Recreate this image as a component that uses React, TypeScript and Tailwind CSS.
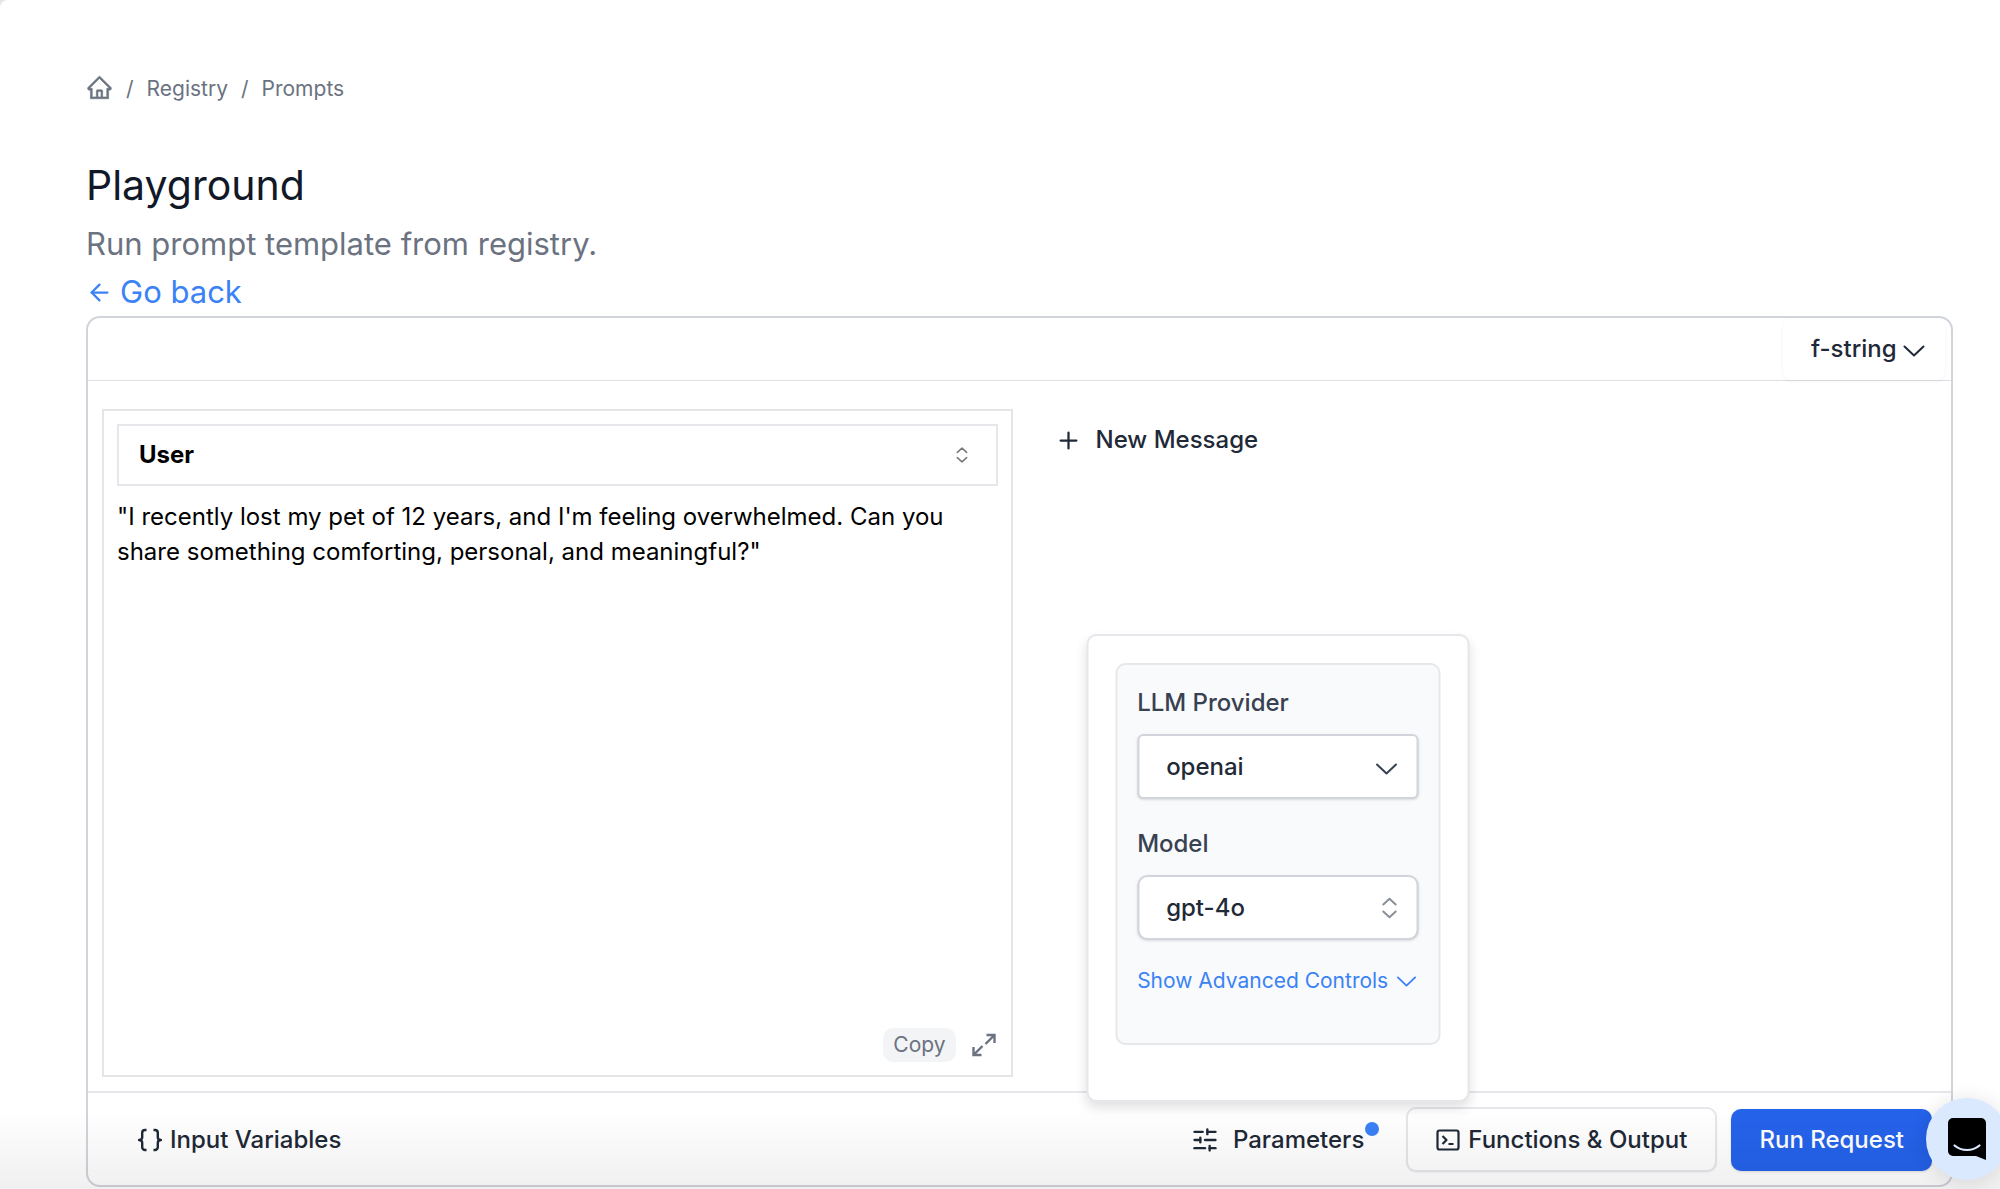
import React from 'react';
import { Plus, SlidersHorizontal, ArrowLeft } from 'lucide-react';
import { AiOutlineHome } from 'react-icons/ai';

interface IconProps {
  className?: string;
}

const ChevronDown: React.FC<IconProps> = ({ className = '' }) => (
  <svg viewBox="0 0 22 12" fill="none" stroke="currentColor" strokeWidth="2" strokeLinecap="round" strokeLinejoin="round" className={className}>
    <path d="M1.5 1.5 11 10.5l9.5-9" />
  </svg>
);

const ChevronUpDown: React.FC<IconProps> = ({ className = '' }) => (
  <svg viewBox="0 0 16 22" fill="none" stroke="currentColor" strokeWidth="2" strokeLinecap="round" strokeLinejoin="round" className={className}>
    <path d="M1.8 7.5 8 1.8l6.2 5.7M1.8 14.5 8 20.2l6.2-5.7" />
  </svg>
);

const BracesIcon: React.FC<IconProps> = ({ className = '' }) => (
  <svg viewBox="0 0 24 24" fill="none" stroke="currentColor" strokeWidth="2.4" strokeLinejoin="round" className={className}>
    <path d="M8.5 2H7a2.8 2.8 0 0 0-2.8 2.8v4.4C4.2 11 3 12 1 12c2 0 3.2 1 3.2 2.8v4.4A2.8 2.8 0 0 0 7 22h1.5" />
    <path d="M15.5 2H17a2.8 2.8 0 0 1 2.8 2.8v4.4c0 1.8 1.2 2.8 3.2 2.8-2 0-3.2 1-3.2 2.8v4.4A2.8 2.8 0 0 1 17 22h-1.5" />
  </svg>
);

const TerminalIcon: React.FC<IconProps> = ({ className = '' }) => (
  <svg viewBox="0 0 24 22" fill="none" stroke="currentColor" strokeWidth="2.2" strokeLinejoin="round" className={className}>
    <rect x="1.5" y="1.5" width="21" height="19" rx="2" />
    <path d="M6.5 7l4 4-4 4M12.5 15h5" />
  </svg>
);

const ExpandIcon: React.FC<IconProps> = ({ className = '' }) => (
  <svg viewBox="0 0 24 24" fill="none" stroke="currentColor" strokeWidth="2.4" className={className}>
    <path d="M14.5 2h8v8M22 2.5l-8.5 8.5M1.5 14v8h8M2 21.5l8.500-8.500" />
  </svg>
);

const Breadcrumbs = () => (
  <nav aria-label="Breadcrumb" className="flex items-center gap-[13px] text-[21px] leading-8 text-[#6b7280]">
    <a href="#home" aria-label="Home" className="pb-1">
      <AiOutlineHome className="h-[27px] w-[27px]" strokeWidth={20} />
    </a>
    <span>/</span>
    <a href="#registry">Registry</a>
    <span>/</span>
    <a href="#prompts">Prompts</a>
  </nav>
);

const MessageCard = () => (
  <div className="flex flex-col border-2 border-[#e5e5e5] p-[13px]">
    <div className="relative">
      <select
        aria-label="Role"
        className="h-[62px] w-full appearance-none border-2 border-[#e5e7eb] bg-white px-5 text-[24px] font-bold text-black"
      >
        <option>User</option>
        <option>Assistant</option>
      </select>
      <ChevronUpDown className="pointer-events-none absolute right-[30px] top-1/2 h-[18px] w-3 -translate-y-1/2 text-[#777777]" />
    </div>
    <textarea
      aria-label="Message"
      className="mt-[13px] w-full flex-1 resize-none text-[24px] leading-[35px] text-black outline-none"
      defaultValue={'"I recently lost my pet of 12 years, and I\'m feeling overwhelmed. Can you share something comforting, personal, and meaningful?"'}
    />
    <div className="flex items-center justify-end gap-4 pr-[2px] text-[#6b7280]">
      <button className="rounded-[10px] bg-[#f3f4f6] px-[10px] text-[21px] leading-[34px]">Copy</button>
      <button aria-label="Expand">
        <ExpandIcon className="h-6 w-6" />
      </button>
    </div>
  </div>
);

const ParametersPopover = () => (
  <div className="absolute bottom-full left-1/2 z-10 mb-[5px] w-[383px] -translate-x-1/2 rounded-[10px] border-2 border-[#e5e7eb] bg-white px-[27px] pb-[55px] pt-[27px] shadow-[0_6px_12px_rgba(0,0,0,0.12)]">
    <div className="rounded-[10px] border-2 border-[#e5e7eb] bg-[#f9fafb] px-5 pb-[46px] pt-5">
      <label htmlFor="provider" className="block text-[24px] font-medium leading-9 text-[#374151]">LLM Provider</label>
      <div className="relative mt-[13px]">
        <select
          id="provider"
          className="h-[65px] w-full appearance-none rounded-md border-2 border-[#d1d5db] bg-white px-[27px] text-[24px] font-medium text-[#1f2937] shadow-sm"
        >
          <option>openai</option>
          <option>anthropic</option>
        </select>
        <ChevronDown className="pointer-events-none absolute right-[21px] top-[29px] h-3 w-[22px] text-[#374151]" />
      </div>
      <label htmlFor="model" className="mt-[27px] block text-[24px] font-medium leading-9 text-[#374151]">Model</label>
      <div className="relative mt-[13px]">
        <select
          id="model"
          className="h-[65px] w-full appearance-none rounded-[10px] border-2 border-[#d1d5db] bg-white px-[27px] text-[24px] font-medium text-[#1f2937] shadow-sm"
        >
          <option>gpt-4o</option>
          <option>gpt-4o-mini</option>
        </select>
        <ChevronUpDown className="pointer-events-none absolute right-[21px] top-1/2 h-[22px] w-4 -translate-y-1/2 text-[#8a8f98]" />
      </div>
      <button className="mt-[25px] flex items-center gap-2 whitespace-nowrap text-[21px] font-normal leading-8 text-[#3b82f6]">
        Show Advanced Controls
        <ChevronDown className="h-[11px] w-5" />
      </button>
    </div>
  </div>
);

const Toolbar = () => (
  <div className="flex items-center justify-between border-t-2 border-[#e5e7eb] pb-[13px] pl-[50px] pr-[19px] pt-[14px] text-[24px] font-medium text-[#1f2937]">
    <button className="flex h-[65px] items-center gap-2">
      <BracesIcon className="h-6 w-6" />
      Input Variables
    </button>
    <div className="flex items-center gap-[14px]">
      <div className="relative">
        <button className="relative flex h-[65px] items-center gap-[14px] px-7">
          <SlidersHorizontal size={28} strokeWidth={2} />
          Parameters
          <span className="absolute right-[13px] top-[15px] h-[14px] w-[14px] rounded-full bg-[#3b82f6]" />
        </button>
        <ParametersPopover />
      </div>
      <button className="flex h-[65px] items-center gap-2 rounded-[10px] border-2 border-[#e5e7eb] bg-white px-7 shadow-xs">
        <TerminalIcon className="h-[22px] w-6" />
        Functions &amp; Output
      </button>
      <button className="h-[62px] rounded-[10px] bg-[#2563eb] px-7 text-white shadow-sm">Run Request</button>
    </div>
  </div>
);

const ChatLauncher = () => (
  <button
    aria-label="Open chat"
    className="fixed -right-2 bottom-[9px] z-30 flex h-[82px] w-[82px] items-center justify-center rounded-full bg-[#dbe9fe] shadow-[0_2px_20px_rgba(0,0,0,0.12)]"
  >
    <svg viewBox="0 0 38 42" className="h-[42px] w-[38px]">
      <path d="M5 0h28a5 5 0 0 1 5 5v37l-10-4H5a5 5 0 0 1-5-5V5a5 5 0 0 1 5-5Z" fill="#000000" />
      <path d="M6.5 27.5c7 6 18 6 25 0" fill="none" stroke="#dbe9fe" strokeWidth="2.2" strokeLinecap="round" />
    </svg>
  </button>
);

export default function App() {
  return (
    <div className="bg-[#e5e7eb] font-['Inter',sans-serif]">
      <div className="flex min-h-screen flex-col rounded-tl-lg bg-white pb-[2px] pl-[86px] pr-[47px] pt-[73px]">
        <Breadcrumbs />
        <header className="mt-[52px]">
          <h1 className="text-[41px] leading-[56px] text-[#111827]">Playground</h1>
          <p className="mt-[7px] text-[31px] leading-[48px] text-[#6b7280]">Run prompt template from registry.</p>
          <a href="#back" className="inline-flex items-center gap-[7px] align-top text-[31px] leading-[48px] text-[#3b82f6]">
            <ArrowLeft size={27} strokeWidth={2} />
            Go back
          </a>
        </header>

        <main className="flex flex-1 flex-col rounded-[14px] border-2 border-[#d1d5db]">
          <div className="flex justify-end border-b border-[#dcdfe4] pr-[6px]">
            <div className="relative">
              <select
                aria-label="Template format"
                className="h-[62px] w-[162px] appearance-none rounded-lg bg-white pl-7 text-[24px] font-medium text-[#1f2937] shadow-[0_1px_3px_rgba(0,0,0,0.06)]"
              >
                <option>f-string</option>
                <option>jinja2</option>
              </select>
              <ChevronDown className="pointer-events-none absolute right-5 top-[27px] h-3 w-[22px] text-[#1f2937]" />
            </div>
          </div>

          <div className="grid flex-1 grid-cols-2 gap-[14px] px-[14px] pb-[14px] pt-7">
            <MessageCard />
            <div>
              <button className="flex h-[62px] items-center gap-[14px] px-7 text-[24px] font-medium text-[#1f2937]">
                <Plus size={27} strokeWidth={2} />
                New Message
              </button>
            </div>
          </div>

          <Toolbar />
        </main>
      </div>

      <div className="pointer-events-none fixed inset-x-0 bottom-0 z-20 h-20 bg-linear-to-t from-black/6 to-transparent" />
      <ChatLauncher />
    </div>
  );
}
